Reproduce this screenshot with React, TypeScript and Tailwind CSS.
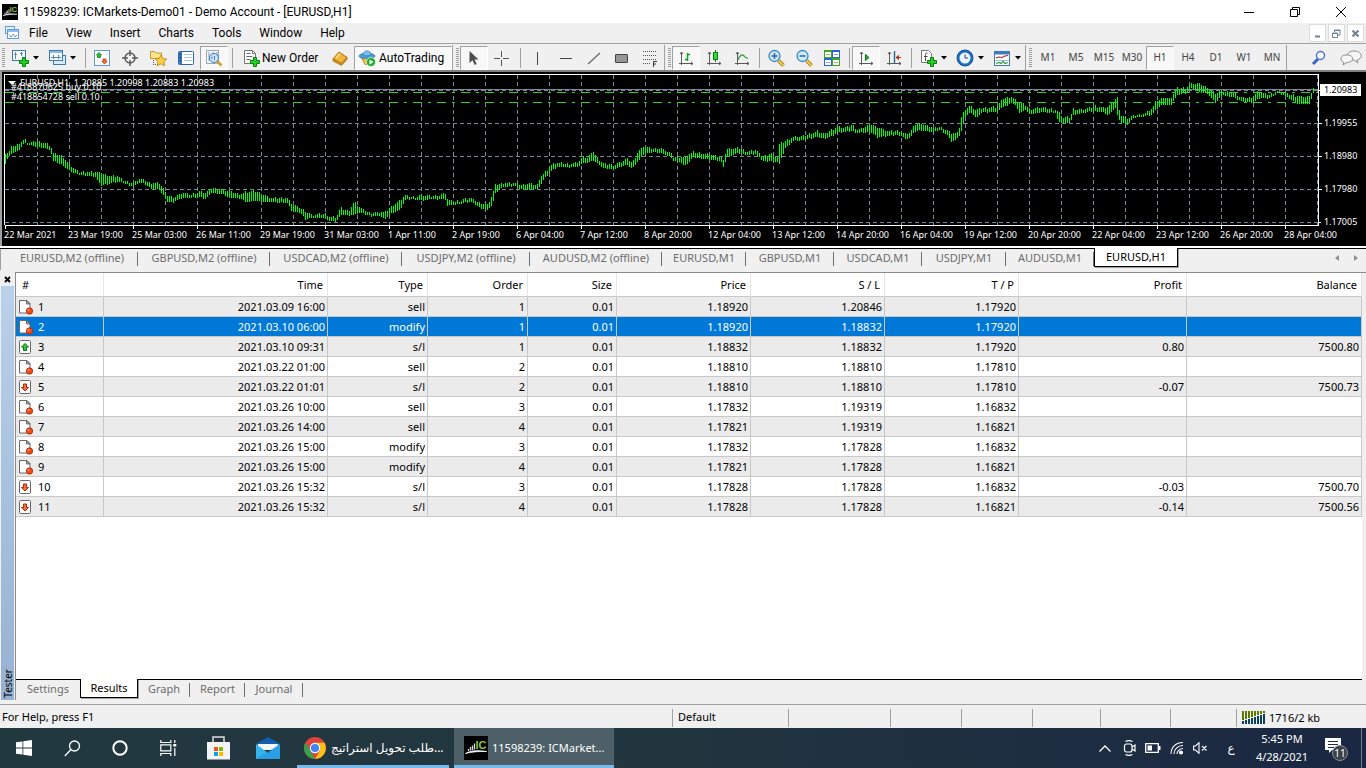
import clsx from 'clsx';
import type { ReactNode } from 'react';
import { useState } from 'react';

// [x, high, low] turning points of the H1 bars, in chart pixels
const ANCHORS: [number, number, number][] = [
  [5, 153, 164], [8, 153, 157], [12, 145, 153], [16, 146, 152], [20, 142, 148], [24, 139, 143],
  [28, 143, 145], [37, 141, 147], [43, 143, 148], [50, 145, 150], [53, 153, 161], [62, 156, 165],
  [68, 163, 170], [78, 172, 175], [95, 172, 177], [101, 173, 186], [110, 176, 183], [117, 176, 182],
  [123, 180, 183], [133, 183, 187], [138, 179, 183], [143, 180, 183], [150, 183, 188], [159, 183, 190],
  [163, 188, 195], [166, 195, 202], [173, 197, 202], [182, 193, 198], [190, 195, 198], [200, 191, 197],
  [205, 193, 199], [211, 188, 193], [222, 189, 194], [230, 192, 198], [240, 194, 198], [245, 192, 202],
  [255, 191, 201], [262, 194, 202], [270, 198, 202], [287, 198, 203], [292, 204, 212], [300, 208, 213],
  [305, 211, 219], [312, 215, 218], [325, 214, 218], [330, 217, 221], [336, 217, 222], [340, 208, 215],
  [348, 211, 215], [354, 202, 215], [360, 208, 213], [370, 213, 216], [380, 212, 216], [385, 212, 219],
  [390, 207, 214], [400, 200, 210], [405, 195, 200], [413, 197, 199], [422, 195, 201], [430, 196, 199],
  [440, 195, 199], [445, 193, 200], [447, 199, 206], [453, 202, 205], [470, 198, 202], [480, 203, 208],
  [487, 205, 210], [492, 195, 205], [495, 185, 193], [502, 183, 187], [515, 183, 186], [520, 185, 189],
  [528, 183, 190], [538, 185, 189], [540, 176, 185], [545, 172, 177], [552, 164, 170], [557, 163, 167],
  [567, 164, 167], [577, 162, 167], [583, 157, 163], [588, 158, 163], [592, 150, 160], [597, 158, 163],
  [602, 163, 168], [613, 165, 169], [622, 162, 166], [626, 158, 165], [632, 163, 169], [637, 153, 162],
  [643, 146, 155], [652, 149, 152], [660, 148, 153], [670, 153, 157], [673, 157, 161], [680, 157, 161],
  [684, 157, 167], [693, 152, 157], [707, 154, 159], [720, 157, 161], [723, 159, 166], [727, 149, 157],
  [740, 148, 153], [747, 152, 155], [755, 150, 154], [763, 157, 161], [770, 153, 161], [777, 157, 162],
  [779, 144, 164], [785, 141, 148], [793, 137, 141], [803, 136, 140], [817, 131, 137], [825, 134, 139],
  [837, 126, 133], [843, 128, 132], [852, 125, 131], [858, 130, 133], [870, 124, 132], [877, 127, 137],
  [887, 131, 136], [900, 131, 135], [905, 134, 139], [910, 132, 137], [914, 125, 132], [920, 123, 130],
  [933, 128, 132], [940, 127, 130], [947, 130, 135], [951, 133, 142], [958, 133, 138], [961, 117, 131],
  [965, 109, 117], [970, 106, 112], [976, 110, 118], [982, 108, 112], [997, 107, 112], [1002, 99, 107],
  [1007, 98, 106], [1010, 96, 102], [1015, 100, 105], [1019, 103, 113], [1025, 105, 110],
  [1030, 109, 114], [1043, 107, 112], [1055, 110, 113], [1058, 112, 122], [1063, 118, 123],
  [1070, 117, 123], [1073, 109, 115], [1082, 110, 113], [1095, 106, 111], [1103, 108, 112],
  [1108, 106, 115], [1115, 99, 108], [1117, 98, 115], [1120, 115, 122], [1127, 118, 125],
  [1133, 116, 118], [1145, 113, 116], [1152, 108, 115], [1155, 102, 110], [1163, 97, 104],
  [1170, 99, 106], [1177, 88, 95], [1185, 88, 93], [1192, 83, 88], [1199, 84, 92], [1207, 87, 93],
  [1215, 93, 103], [1222, 91, 95], [1233, 93, 97], [1242, 98, 102], [1253, 97, 103], [1258, 91, 98],
  [1268, 95, 99], [1277, 91, 93], [1285, 93, 96], [1297, 96, 104], [1309, 97, 104], [1313, 88, 93],
];

function buildBars() {
  let d = '';
  let i = 0;
  for (let x = 5; x <= 1313; x += 2) {
    while (i < ANCHORS.length - 2 && ANCHORS[i + 1][0] < x) i++;
    const [x0, h0, l0] = ANCHORS[i];
    const [x1, h1, l1] = ANCHORS[i + 1];
    const t = (x - x0) / (x1 - x0);
    const wobble = ((x * 37) % 11) / 5 - 1;
    const high = Math.round(h0 + (h1 - h0) * t + wobble);
    const low = Math.round(l0 + (l1 - l0) * t + wobble / 2);
    d += `M${x + 0.5} ${high}V${Math.max(low, high + 2)}`;
  }
  return d;
}

const BARS = buildBars();
const GRID_X = Array.from({ length: 41 }, (_, k) => 37 + k * 32);
const GRID_Y = [90, 123, 156, 189, 222];

const DATES = [
  '22 Mar 2021', '23 Mar 19:00', '25 Mar 03:00', '26 Mar 11:00', '29 Mar 19:00', '31 Mar 03:00', '1 Apr 11:00',
  '2 Apr 19:00', '6 Apr 04:00', '7 Apr 12:00', '8 Apr 20:00', '12 Apr 04:00', '13 Apr 12:00', '14 Apr 20:00',
  '16 Apr 04:00', '19 Apr 12:00', '20 Apr 20:00', '22 Apr 04:00', '23 Apr 12:00', '26 Apr 20:00', '28 Apr 04:00',
];

const CHART_TABS = [
  { name: 'EURUSD,M2 (offline)', width: 'w-[132px]' },
  { name: 'GBPUSD,M2 (offline)', width: 'w-[132px]' },
  { name: 'USDCAD,M2 (offline)', width: 'w-[132px]' },
  { name: 'USDJPY,M2 (offline)', width: 'w-[128px]' },
  { name: 'AUDUSD,M2 (offline)', width: 'w-[132px]' },
  { name: 'EURUSD,M1', width: 'w-[84px]' },
  { name: 'GBPUSD,M1', width: 'w-[88px]' },
  { name: 'USDCAD,M1', width: 'w-[88px]' },
  { name: 'USDJPY,M1', width: 'w-[84px]' },
  { name: 'AUDUSD,M1', width: 'w-[88px]' },
  { name: 'EURUSD,H1', width: 'w-[84px]' },
];

const TIMEFRAMES = ['M1', 'M5', 'M15', 'M30', 'H1', 'H4', 'D1', 'W1', 'MN'];

const TESTER_TABS = [
  { name: 'Settings', width: 'w-16' },
  { name: 'Results', width: 'w-[58px]' },
  { name: 'Graph', width: 'w-[52px]' },
  { name: 'Report', width: 'w-[55px]' },
  { name: 'Journal', width: 'w-[58px]' },
];

const COLUMNS = [
  { name: '#', width: 'w-[88px]' },
  { name: 'Time', width: 'w-[224px]' },
  { name: 'Type', width: 'w-[100px]' },
  { name: 'Order', width: 'w-[100px]' },
  { name: 'Size', width: 'w-[89px]' },
  { name: 'Price', width: 'w-[134px]' },
  { name: 'S / L', width: 'w-[134px]' },
  { name: 'T / P', width: 'w-[134px]' },
  { name: 'Profit', width: 'w-[168px]' },
  { name: 'Balance', width: '' },
];

type Kind = 'order' | 'up' | 'down';

const ROWS: { kind: Kind; cells: string[] }[] = [
  { kind: 'order', cells: ['2021.03.09 16:00', 'sell', '1', '0.01', '1.18920', '1.20846', '1.17920', '', ''] },
  { kind: 'order', cells: ['2021.03.10 06:00', 'modify', '1', '0.01', '1.18920', '1.18832', '1.17920', '', ''] },
  { kind: 'up', cells: ['2021.03.10 09:31', 's/l', '1', '0.01', '1.18832', '1.18832', '1.17920', '0.80', '7500.80'] },
  { kind: 'order', cells: ['2021.03.22 01:00', 'sell', '2', '0.01', '1.18810', '1.18810', '1.17810', '', ''] },
  { kind: 'down', cells: ['2021.03.22 01:01', 's/l', '2', '0.01', '1.18810', '1.18810', '1.17810', '-0.07', '7500.73'] },
  { kind: 'order', cells: ['2021.03.26 10:00', 'sell', '3', '0.01', '1.17832', '1.19319', '1.16832', '', ''] },
  { kind: 'order', cells: ['2021.03.26 14:00', 'sell', '4', '0.01', '1.17821', '1.19319', '1.16821', '', ''] },
  { kind: 'order', cells: ['2021.03.26 15:00', 'modify', '3', '0.01', '1.17832', '1.17828', '1.16832', '', ''] },
  { kind: 'order', cells: ['2021.03.26 15:00', 'modify', '4', '0.01', '1.17821', '1.17828', '1.16821', '', ''] },
  { kind: 'down', cells: ['2021.03.26 15:32', 's/l', '3', '0.01', '1.17828', '1.17828', '1.16832', '-0.03', '7500.70'] },
  { kind: 'down', cells: ['2021.03.26 15:32', 's/l', '4', '0.01', '1.17828', '1.17828', '1.16821', '-0.14', '7500.56'] },
];

/* ---------- icons ---------- */

function Icon({ size = 18, children }: { size?: number; children: ReactNode }) {
  return (
    <svg width={size} height={size} viewBox="0 0 18 18" fill="none" className="shrink-0" aria-hidden="true">
      {children}
    </svg>
  );
}

const plus = <path d="M11.500 8.500h3v3h3v3h-3v3h-3v-3h-3v-3h3z" fill="#1fd01f" stroke="#0a7d12" />;

const NewChartIcon = () => (
  <Icon>
    <rect x="1.5" y="1.5" width="13" height="10" fill="#f4faff" stroke="#3f78b4" />
    <path d="M4.5 3v7M3 5.500h3M10.500 3v4M9 4.500h3" stroke="#5d87ad" />
    {plus}
  </Icon>
);

const ProfilesIcon = () => (
  <Icon>
    <rect x="5.500" y="6.500" width="12" height="9" fill="#d9ebfb" stroke="#3f78b4" />
    <rect x="1.500" y="1.500" width="13" height="10" fill="#f4faff" stroke="#3f78b4" />
    <path d="M2 3h12" stroke="#8fb9e2" strokeWidth="2" />
    <path d="M3 8.500h10M5.500 6v4M10.500 6v4" stroke="#5d87ad" />
  </Icon>
);

const MarketWatchIcon = () => (
  <Icon>
    <rect x="1.500" y="1.500" width="15" height="15" fill="#fff" stroke="#5b9bdc" />
    <path d="M4 12h1M12 5h3" stroke="#c9d8e6" />
    <path d="M6 3.500l2.500 2.500H7.500v2.500h-3V6H3.500z" fill="#2fc12f" stroke="#0c7a17" strokeWidth=".8" />
    <path d="M11.500 15L9 12.500h1V10h3v2.500h1z" fill="#ff7038" stroke="#b83208" strokeWidth=".8" />
  </Icon>
);

const DataWindowIcon = () => (
  <Icon>
    <circle cx="9" cy="9" r="5" stroke="#5a5a5a" strokeWidth="1.500" />
    <path d="M9 1v6M9 11v6M1 9h6M11 9h6" stroke="#5a5a5a" strokeWidth="1.500" />
  </Icon>
);

const NavigatorIcon = () => (
  <Icon>
    <path d="M1.500 9.500v-7h4l1 1.500h6v5.500z" fill="#ffe48f" stroke="#c69a28" />
    <path d="M4.500 11v5M6 15.500h3" stroke="#555" strokeDasharray="1 1" />
    <path d="M12 6l1.800 3.600 4 .5-2.900 2.700.8 4-3.700-2-3.700 2 .8-4L6.200 10l4-.5z" fill="#ffcf3d" stroke="#b8860b" strokeWidth=".8" />
  </Icon>
);

const TerminalIcon = () => (
  <Icon>
    <rect x="1.500" y="2.500" width="15" height="13" rx="1" fill="#fff" stroke="#2a66b0" />
    <path d="M2 3h3v12H2z" fill="#3a76bd" />
    <path d="M3 5.500h1M3 8.500h1M3 11.500h1" stroke="#123" />
    <path d="M7 5.500h8M7 8.500h8M7 11.500h8" stroke="#a9c8e8" />
  </Icon>
);

const TesterIcon = () => (
  <Icon>
    <rect x="1.500" y="1.500" width="12" height="13" fill="#f5f7fa" stroke="#9aa7b5" />
    <path d="M4 3v9M8 3v4M12 3v4" stroke="#8797a8" />
    <path d="M12 12l4.500 4.500" stroke="#d6a31f" strokeWidth="2.500" />
    <circle cx="9" cy="9" r="4.500" fill="#c8e4fb" fillOpacity=".85" stroke="#3c7cc4" />
    <path d="M7 10V7.500M9.500 11V7" stroke="#4f81b4" />
  </Icon>
);

const NewOrderIcon = () => (
  <Icon>
    <path d="M2.500 1.500h8l3 3v10h-11z" fill="#fff" stroke="#777" />
    <path d="M10.500 1.500v3h3" stroke="#777" />
    <path d="M4.500 4.500h4M4.500 7.500h6M4.500 10.500h4" stroke="#666" />
    {plus}
  </Icon>
);

const MetaEditorIcon = () => (
  <Icon>
    <path d="M2 10l6-7 8 5.500-5.500 6z" fill="#f2b53a" stroke="#a86a0a" />
    <path d="M2 10l8.500 4.500 5.500-6v2l-5.500 6L2 12z" fill="#d9952a" stroke="#a86a0a" strokeWidth=".7" />
    <path d="M5 9l4-4.500" stroke="#ffe29a" strokeWidth="1.500" />
  </Icon>
);

const AutoTradingIcon = () => (
  <Icon>
    <path d="M3 8l4 7.500h4L15 8z" fill="#f3c445" stroke="#ad7f15" strokeWidth=".8" />
    <ellipse cx="9" cy="7" rx="8" ry="2.800" fill="#4b9fd6" stroke="#2873a8" strokeWidth=".7" />
    <path d="M5 6c0-5.500 8-5.500 8 0-2 1.200-6 1.200-8 0z" fill="#79c1ea" stroke="#2873a8" strokeWidth=".7" />
    <circle cx="13" cy="13" r="4.500" fill="#1fae2b" stroke="#fff" strokeWidth=".6" />
    <path d="M11.500 10.500l4 2.500-4 2.500z" fill="#fff" />
  </Icon>
);

const CursorIcon = () => (
  <Icon>
    <path d="M4.500 2v12l3-2.800 2.200 4.800 2-1-2.200-4.500h4z" fill="#4d4d4d" />
  </Icon>
);

const CrosshairIcon = () => (
  <Icon>
    <path d="M8.500 2v6M8.500 11v6M1 9.500h6M10 9.500h6" stroke="#555" />
  </Icon>
);

const VLineIcon = () => <Icon><path d="M8.500 3v13" stroke="#444" /></Icon>;
const HLineIcon = () => <Icon><path d="M3 9.500h12" stroke="#444" /></Icon>;
const TrendIcon = () => <Icon><path d="M3 15L15 4" stroke="#666" strokeWidth="1.200" /></Icon>;
const RectIcon = () => (
  <Icon><rect x="2.500" y="5.500" width="12" height="8" rx=".5" fill="#969696" stroke="#444" /></Icon>
);

const FiboIcon = () => (
  <Icon>
    <path d="M2 2.500h14M2 6.500h14M2 10.500h14M2 14.500h8" stroke="#555" strokeDasharray="1 1" />
    <path d="M12.500 18v-5.500H16M12.500 15H15" stroke="#333" />
  </Icon>
);

const axes = <path d="M4.500 3v13M2 14.500h14M3 5l1.500-2L6 5M14 13l2 1.500-2 1.500" stroke="#5a5a5a" />;

const BarIcon = () => (
  <Icon>{axes}<path d="M10.500 4v8M8 10.500h2.500M10.500 5.500H13" stroke="#16a01f" strokeWidth="1.500" /></Icon>
);

const CandleIcon = () => (
  <Icon>
    {axes}
    <path d="M10.500 1v12" stroke="#0b7d15" />
    <rect x="8.500" y="3.500" width="4" height="7" fill="#2bdc3a" stroke="#0b7d15" />
  </Icon>
);

const LineIcon = () => (
  <Icon>{axes}<path d="M5 11c2-6 5-6 7-3l3 1.500" stroke="#3aa043" strokeWidth="1.300" /></Icon>
);

function ZoomIcon({ plusSign }: { plusSign?: boolean }) {
  return (
    <Icon>
      <path d="M11.500 11.500l5 5" stroke="#8d6912" strokeWidth="3.500" />
      <path d="M11.500 11.500l5 5" stroke="#f5cf3c" strokeWidth="2" />
      <circle cx="7.500" cy="7" r="5.500" fill="#cfeafd" stroke="#3a86c8" strokeWidth="1.300" />
      <path d="M4.500 7h6" stroke="#2f6fa8" strokeWidth="1.600" />
      {plusSign && <path d="M7.500 4v6" stroke="#2f6fa8" strokeWidth="1.600" />}
    </Icon>
  );
}

const TileIcon = () => (
  <Icon>
    <path d="M1 1h8v8H1zM9 9h8v8H9z" fill="#43a51c" />
    <path d="M9 1h8v8H9zM1 9h8v8H1z" fill="#2a62d8" />
    <path d="M2 3h6v5H2zM10 3h6v5h-6zM2 11h6v5H2zM10 11h6v5h-6z" fill="#fff" />
    <path d="M3 5.500h4M11 5.500h4M3 13.500h4M11 13.500h4" stroke="#8ab0a0" />
  </Icon>
);

const ScrollIcon = () => (
  <Icon>{axes}<path d="M8.500 5.500v6L12 8.500z" fill="#1fb52a" stroke="#0b7d15" /></Icon>
);

const ShiftIcon = () => (
  <Icon>
    {axes}
    <path d="M9.500 2v12" stroke="#2b6f9e" strokeWidth="1.500" />
    <path d="M16 8.500h-3M13.500 6.500l-2.500 2 2.500 2z" stroke="#b33a12" fill="#b33a12" />
  </Icon>
);

const IndicatorIcon = () => (
  <Icon>
    <path d="M2.500 1.500h7l3 3v9h-10z" fill="#fff" stroke="#777" />
    <path d="M8.500 4C6 3.500 6.500 6 6.500 12M5 7.500h3.500" stroke="#444" />
    {plus}
  </Icon>
);

const ClockIcon = () => (
  <Icon>
    <circle cx="9" cy="9" r="8" fill="#1f6fc4" stroke="#164f8f" />
    <circle cx="9" cy="9" r="5.500" fill="#eaf5ff" />
    <path d="M9 5.500V9h3" stroke="#345" />
  </Icon>
);

const TemplateIcon = () => (
  <Icon>
    <rect x="1.500" y="2.500" width="15" height="14" fill="#fff" stroke="#3f78b4" />
    <path d="M2 4h14" stroke="#3b7cc6" strokeWidth="3" />
    <path d="M3 9l3-1 3 .5 3-1.500 3-.5" stroke="#9c2f22" strokeWidth="1.200" />
    <path d="M2 11.500h14" stroke="#9bbce0" />
    <path d="M3 14.500l3-1 2 1 2-2 2 2 3-1" stroke="#2d9c3a" strokeWidth="1.200" />
  </Icon>
);

const SearchIcon = () => (
  <Icon>
    <path d="M3 15l5-5" stroke="#3a62c4" strokeWidth="3" />
    <circle cx="10.500" cy="6.500" r="4" fill="#fff" stroke="#4b74d6" strokeWidth="1.500" />
  </Icon>
);

const ChatIcon = () => (
  <svg width="22" height="18" viewBox="0 0 22 18" fill="#f6f6f6" stroke="#8c8c8c" aria-hidden="true">
    <path d="M14 2c9 0 9 8 3 9l1 3-4-3C6 11 5 2 14 2z" />
    <path d="M7 6c-8 0-7 6.500-3 7.500L3 16l4-2.500c7 0 8-7.500 0-7.500z" />
  </svg>
);

function BrandIcon({ size }: { size: number }) {
  return (
    <svg width={size} height={size} viewBox="0 0 24 24" className="shrink-0" aria-hidden="true">
      <path d="M0 0h24v24H0z" fill="#000" />
      <path d="M4.500 15v-2M6.500 14.500V11M8.500 14V9.500M10.500 13.500V7.500" stroke="#d8d8d8" strokeWidth="1.300" />
      <path d="M1.500 17.500c5-3 11-3.500 21-2-8-.2-14 .2-21 2z" fill="#fff" stroke="#fff" strokeWidth=".8" />
      <text x="11.500" y="12.500" fontSize="11" fontWeight="700" fill="#8dc63f" fontFamily="Liberation Sans, sans-serif">IC</text>
    </svg>
  );
}

const RowIcon = ({ kind }: { kind: Kind }) => (
  <svg width="16" height="16" viewBox="0 0 16 16" fill="none" className="shrink-0" aria-hidden="true">
    {kind === 'order' ? (
      <>
        <path d="M1.500 1.500h7.500l3 3v9.500H1.500z" fill="#fff" stroke="#6a6a6a" />
        <path d="M8.500 1.500v3.500h3.500z" fill="#aaa" stroke="#555" strokeWidth=".8" />
        <circle cx="11.500" cy="12" r="3.200" fill="#f04a18" stroke="#a82a06" strokeWidth=".8" />
        <circle cx="10.500" cy="11" r="1" fill="#ff9a72" />
      </>
    ) : (
      <>
        <rect x="1.500" y="1.500" width="11" height="13" rx="1" fill="#fdfdfd" stroke="#6a6a6a" />
        {kind === 'up' ? (
          <path d="M7 4.500L10.500 8H8.500v3.500h-3V8h-2z" fill="#2fc93a" stroke="#0b7213" />
        ) : (
          <path d="M7 12L10.500 8.500H8.500V5h-3v3.500h-2z" fill="#ff6a3c" stroke="#a82a06" />
        )}
      </>
    )}
  </svg>
);

/* ---------- toolbar pieces ---------- */

const Caret = () => (
  <svg width="6" height="4" viewBox="0 0 6 4" className="shrink-0" aria-hidden="true">
    <path d="M0 0h6L3 3.500z" fill="#000" />
  </svg>
);

const Sep = ({ wide }: { wide?: boolean }) => (
  <span className={clsx('flex shrink-0 justify-center', wide ? 'w-2' : 'w-1.5')}>
    <span className="h-5 w-px bg-[#a0a0a0]" />
  </span>
);

// start of a docked bar: raised edge, then the dotted grip
const Grip = () => (
  <span className="flex h-full w-2 shrink-0 items-center gap-[3px]">
    <span className="h-full w-px bg-[#a0a0a0]" />
    <span className="h-5 w-[3px] bg-[repeating-linear-gradient(#a0a0a0_0_1px,#f0f0f0_1px_2px)]" />
  </span>
);

interface ToolProps {
  label: string;
  pressed?: boolean;
  menu?: boolean;
  children: ReactNode;
}

function Tool({ label, pressed, menu, children }: ToolProps) {
  return (
    <button
      aria-label={label}
      className={clsx(
        'flex h-6 shrink-0 items-center border',
        menu ? 'w-[37px] gap-1 pl-1' : 'w-7 justify-center',
        pressed ? 'border-r-white border-b-white border-t-[#a0a0a0] border-l-[#a0a0a0] bg-[#f8f8f8]' : 'border-transparent hover:bg-[#f8f8f8]',
      )}
    >
      {children}
      {menu && <Caret />}
    </button>
  );
}

function Toolbar() {
  const [frame, setFrame] = useState('H1');

  return (
    <div className="flex h-[27px] shrink-0 items-center border-t border-[#a0a0a0] bg-[#f0f0f0] pt-px">
      <span className="ml-0.5 mr-px h-5 w-[3px] bg-[repeating-linear-gradient(#a0a0a0_0_1px,#f0f0f0_1px_2px)]" />
      <span className="mr-0.5 flex">
        <Tool label="New Chart" menu><NewChartIcon /></Tool>
        <Tool label="Profiles" menu><ProfilesIcon /></Tool>
      </span>
      <Sep />
      <Tool label="Market Watch"><MarketWatchIcon /></Tool>
      <Tool label="Data Window"><DataWindowIcon /></Tool>
      <Tool label="Navigator"><NavigatorIcon /></Tool>
      <Tool label="Terminal"><TerminalIcon /></Tool>
      <Tool label="Strategy Tester" pressed><TesterIcon /></Tool>
      <Sep wide />
      <button className="flex h-6 w-[90px] shrink-0 items-center gap-0.5 pl-1.5 font-[Roboto] text-[12px] whitespace-nowrap">
        <NewOrderIcon />
        New Order
      </button>
      <Tool label="MetaEditor"><MetaEditorIcon /></Tool>
      <button className="flex h-6 w-[98px] shrink-0 items-center gap-[3px] border border-r-white border-b-white border-t-[#a0a0a0] border-l-[#a0a0a0] bg-[#f8f8f8] pl-[3px] font-[Roboto] text-[12px] whitespace-nowrap">
        <AutoTradingIcon />
        AutoTrading
      </button>
      <Grip />
      <Tool label="Cursor" pressed><CursorIcon /></Tool>
      <Tool label="Crosshair"><CrosshairIcon /></Tool>
      <Sep wide />
      <Tool label="Vertical Line"><VLineIcon /></Tool>
      <Tool label="Horizontal Line"><HLineIcon /></Tool>
      <Tool label="Trendline"><TrendIcon /></Tool>
      <Tool label="Rectangle"><RectIcon /></Tool>
      <Tool label="Fibonacci"><FiboIcon /></Tool>
      <Grip />
      <Tool label="Bar Chart" pressed><BarIcon /></Tool>
      <Tool label="Candlesticks"><CandleIcon /></Tool>
      <Tool label="Line Chart"><LineIcon /></Tool>
      <Sep />
      <Tool label="Zoom In"><ZoomIcon plusSign /></Tool>
      <Tool label="Zoom Out"><ZoomIcon /></Tool>
      <Tool label="Tile Windows"><TileIcon /></Tool>
      <Sep />
      <Tool label="Auto Scroll" pressed><ScrollIcon /></Tool>
      <Tool label="Chart Shift"><ShiftIcon /></Tool>
      <Sep />
      <Tool label="Indicators" menu><IndicatorIcon /></Tool>
      <Tool label="Periods" menu><ClockIcon /></Tool>
      <Tool label="Templates" menu><TemplateIcon /></Tool>
      <Grip />
      <span className="ml-px flex">
        {TIMEFRAMES.map((tf) => (
          <button
            key={tf}
            onClick={() => setFrame(tf)}
            className={clsx(
              'h-6 w-7 shrink-0 border text-center text-[10px] text-[#444]',
              tf === frame ? 'border-r-white border-b-white border-t-[#a0a0a0] border-l-[#a0a0a0] bg-[#f8f8f8]' : 'border-transparent',
            )}
          >
            {tf}
          </button>
        ))}
      </span>
      <span className="h-full w-px bg-[#a0a0a0]" />
      <span className="ml-auto flex items-center gap-3 pr-1">
        <button aria-label="Search"><SearchIcon /></button>
        <button aria-label="Chat"><ChatIcon /></button>
      </span>
    </div>
  );
}

/* ---------- chart ---------- */

function Chart() {
  return (
    <div className="relative h-[176px] shrink-0 overflow-hidden border-t-2 border-l-2 border-t-[#808080] border-l-[#a0a0a0] bg-black text-[9px] text-white">
      <svg width="1320" height="160" viewBox="2 72 1320 160" fill="none" shapeRendering="crispEdges" aria-hidden="true">
        <g stroke="#778899" strokeDasharray="4 3">
          {GRID_X.map((x) => <path key={x} d={`M${x + 0.5} 75V225`} />)}
          {GRID_Y.map((y) => <path key={y} d={`M5 ${y + 0.5}H1318`} />)}
        </g>
        <path d="M5 89.500H1318" stroke="#778899" />
        <path d="M5 92.500H1318M5 102.500H1318" stroke="#32cd32" strokeDasharray="9 6 3 6" />
        <path d={BARS} stroke="#00ff00" />
        <path d="M4.500 225V74.500H1318.500V225.500H4.500" stroke="#fff" />
        <path d={DATES.map((_, k) => `M${5.500 + k * 64} 226v3`).join('')} stroke="#fff" />
        <path d="M1319 90.500h3M1319 123.500h3M1319 156.500h3M1319 189.500h3M1319 222.500h2" stroke="#fff" />
      </svg>
      <div className="absolute top-[157px] left-0.5 flex leading-3 whitespace-nowrap">
        {DATES.map((d) => <span key={d} className="w-16 shrink-0">{d}</span>)}
      </div>
      <p className="absolute top-[5px] left-1.5 flex items-center gap-1 leading-3 whitespace-pre">
        <svg width="8" height="4" aria-hidden="true"><path d="M0 0h8L4 4z" fill="#fff" /></svg>
        EURUSD,H1  1.20885 1.20998 1.20883 1.20983
      </p>
      <p className="absolute top-[9px] left-[9px] leading-3">#418870625 buy 0.10</p>
      <p className="absolute top-[19px] left-[9px] leading-3">#418854728 sell 0.10</p>
      <div className="absolute top-3 left-[1318px] flex flex-col gap-[21px] leading-3">
        <span className="w-[41px] bg-white pl-1 text-black">1.20983</span>
        <span className="pl-1">1.19955</span>
        <span className="pl-1">1.18980</span>
        <span className="pl-1">1.17980</span>
        <span className="pl-1">1.17005</span>
      </div>
    </div>
  );
}

function ChartTabs() {
  const [active, setActive] = useState('EURUSD,H1');

  return (
    <div className="flex h-[22px] shrink-0 border-t border-black bg-[#f0f0f0] pl-1.5 shadow-[inset_1px_0_#a0a0a0]">
      {CHART_TABS.map((tab) => {
        const on = tab.name === active;
        return (
          <button
            key={tab.name}
            onClick={() => setActive(tab.name)}
            className={clsx(
              'relative h-[19px] shrink-0 text-[11px] whitespace-nowrap',
              tab.width,
              on
                ? '-mt-px h-5 border border-t-0 border-black bg-white text-black shadow-[1px_1px_#a0a0a0]'
                : 'text-[#6d6d6d] after:absolute after:top-[3px] after:right-0 after:h-3.5 after:w-px after:bg-[#6d6d6d]',
            )}
          >
            {tab.name}
          </button>
        );
      })}
      <span className="ml-auto flex items-center gap-[15px] pr-2 pb-1">
        <button aria-label="Scroll left">
          <svg width="4" height="6" aria-hidden="true"><path d="M4 0v6L0 3z" fill="#8c8c8c" /></svg>
        </button>
        <button aria-label="Scroll right">
          <svg width="4" height="6" aria-hidden="true"><path d="M0 0v6l4-3z" fill="#8c8c8c" /></svg>
        </button>
      </span>
    </div>
  );
}

/* ---------- tester ---------- */

function ResultsTable() {
  const [selected, setSelected] = useState(1);

  return (
    <table className="w-full table-fixed border-separate border-spacing-0 text-[11px] leading-4">
      <thead>
        <tr>
          {COLUMNS.map((col, i) => (
            <th
              key={col.name}
              className={clsx(
                'h-6 border-r border-b border-r-[#e5e5e5] border-b-[#c8c8c8] p-0 font-normal',
                col.width,
                i === 0 ? 'pl-1.5 text-left' : 'pr-1 text-right',
              )}
            >
              {col.name}
            </th>
          ))}
        </tr>
      </thead>
      <tbody>
        {ROWS.map((row, i) => (
          <tr
            key={i}
            onClick={() => setSelected(i)}
            className={clsx(i === selected ? 'bg-[#0078d7] text-white' : i % 2 === 0 ? 'bg-[#ebebeb]' : 'bg-white')}
          >
            <td className="h-5 border-r border-b border-[#c8c8c8] p-0">
              <span className="flex items-center gap-1 pl-0.5">
                <RowIcon kind={row.kind} />
                {i + 1}
              </span>
            </td>
            {row.cells.map((cell, c) => (
              <td key={c} className="h-5 border-r border-b border-[#c8c8c8] p-0 pr-0.5 text-right">{cell}</td>
            ))}
          </tr>
        ))}
      </tbody>
    </table>
  );
}

function Tester() {
  const [tab, setTab] = useState('Results');

  return (
    <section className="flex min-h-0 flex-1 bg-[#f0f0f0] pt-0.5">
      <div className="flex w-[15px] shrink-0 flex-col px-px">
        <button aria-label="Close" className="flex h-3.5 items-center justify-center">
          <svg width="7" height="7" aria-hidden="true"><path d="M1 1l5 5M6 1L1 6" stroke="#000" strokeWidth="1.800" /></svg>
        </button>
        <div className="flex flex-1 items-end justify-center bg-linear-to-b from-[#b9d1ea] to-[#97b1d2] pb-0.5">
          <span className="rotate-180 text-[10px] leading-3 [writing-mode:vertical-rl]">Tester</span>
        </div>
      </div>
      <div className="flex min-w-0 flex-1 flex-col border-t border-l border-[#8c8c8c] pr-1">
        <div className="min-h-0 flex-1 bg-white">
          <ResultsTable />
        </div>
        <div className="flex h-[21px] shrink-0 border-t border-black">
          {TESTER_TABS.map((t) => (
            <button
              key={t.name}
              onClick={() => setTab(t.name)}
              className={clsx(
                'relative h-[19px] text-[11px]',
                t.width,
                t.name === tab
                  ? '-mt-px h-5 border border-t-0 border-black bg-white shadow-[1px_1px_#a0a0a0]'
                  : 'text-[#6d6d6d]',
                t.name !== tab && t.name !== 'Settings' && 'after:absolute after:top-[3px] after:right-0 after:h-3.5 after:w-px after:bg-[#6d6d6d]',
              )}
            >
              {t.name}
            </button>
          ))}
        </div>
      </div>
    </section>
  );
}

function StatusBar() {
  return (
    <footer className="mt-1 flex h-6 shrink-0 items-center border-t border-[#a0a0a0] bg-[#f0f0f0] pt-0.5 text-[11px] leading-4">
      <span className="h-[18px] flex-1 pl-0.5">For Help, press F1</span>
      <span className="h-[18px] w-[116px] border-l border-[#a0a0a0] pl-[5px]">Default</span>
      <span className="h-[18px] w-[102px] border-l border-[#a0a0a0]" />
      <span className="h-[18px] w-[71px] border-l border-[#a0a0a0]" />
      <span className="h-[18px] w-[71px] border-l border-[#a0a0a0]" />
      <span className="h-[18px] w-[68px] border-l border-[#a0a0a0]" />
      <span className="h-[18px] w-[70px] border-l border-[#a0a0a0]" />
      <span className="h-[18px] w-[66px] border-l border-[#a0a0a0]" />
      <span className="flex h-[18px] w-[130px] items-center gap-[3px] border-l border-[#a0a0a0] pl-[5px]">
        <svg width="24" height="13" shapeRendering="crispEdges" aria-hidden="true">
          {[0, 1, 2, 3, 4, 5, 6, 7].map((k) => (
            <g key={k}>
              <path d={`M${k * 3 + 1} 0v${9 - k}`} stroke="#5c7a00" strokeWidth="2" />
              <path d={`M${k * 3 + 1} ${10 - k}V13`} stroke="#0b3f5c" strokeWidth="2" />
            </g>
          ))}
        </svg>
        1716/2 kb
      </span>
    </footer>
  );
}

/* ---------- windows taskbar ---------- */

function Taskbar() {
  return (
    <nav className="flex h-10 shrink-0 items-stretch bg-linear-to-r from-[#22383f] via-[#21353f] to-[#1a2742] text-[11px] text-white">
      <button aria-label="Start" className="flex w-12 items-center justify-center">
        <svg width="16" height="16" viewBox="0 0 16 16" fill="#fff" aria-hidden="true">
          <path d="M0 2.300L6.500 1.400v6.200H0zM7.300 1.300L16 0v7.600H7.300zM0 8.400h6.500v6.200L0 13.700zM7.300 8.400H16V16l-8.700-1.300z" />
        </svg>
      </button>
      <button aria-label="Search" className="flex w-12 items-center justify-center">
        <svg width="17" height="17" viewBox="0 0 17 17" fill="none" stroke="#fff" strokeWidth="1.300" aria-hidden="true">
          <circle cx="10.500" cy="6" r="5" />
          <path d="M7 9.500L.8 16" />
        </svg>
      </button>
      <button aria-label="Cortana" className="flex w-12 items-center justify-center">
        <svg width="16" height="16" aria-hidden="true"><circle cx="8" cy="8" r="6.700" fill="none" stroke="#fff" strokeWidth="2" /></svg>
      </button>
      <button aria-label="Task View" className="flex w-12 items-center justify-center">
        <svg width="17" height="16" viewBox="0 0 17 16" fill="none" stroke="#fff" strokeWidth="1.200" aria-hidden="true">
          <path d="M.8 0v2.500h10V0M.8 16v-2.500h10V16M.8 4.800h10v6H.8zM14.800 0v3M14.800 8v8" />
          <path d="M13.300 4h3v2.500h-3z" fill="#fff" stroke="none" />
        </svg>
      </button>
      <button aria-label="Store" className="flex w-[52px] items-center justify-center">
        <svg width="23" height="24" viewBox="0 0 23 24" aria-hidden="true">
          <path d="M6 6V1h11v5" fill="none" stroke="#ddd" strokeWidth="1.500" />
          <path d="M0 6h23v17.500H0z" fill="#f3f3f3" />
          <path d="M7 11h4v4H7z" fill="#f25022" />
          <path d="M12 11h4v4h-4z" fill="#7fba00" />
          <path d="M7 16h4v4H7z" fill="#00a4ef" />
          <path d="M12 16h4v4h-4z" fill="#ffb900" />
        </svg>
      </button>
      <button aria-label="Mail" className="mr-[5px] flex w-12 items-center justify-center">
        <svg width="24" height="22" viewBox="0 0 24 22" aria-hidden="true">
          <path d="M0 7l12-7 12 7v3H0z" fill="#0f5fae" />
          <path d="M2 7h20v6H2z" fill="#f5f5f5" />
          <path d="M0 7l12 9 12-9v15H0z" fill="#35b4ee" />
          <path d="M0 22L24 7v15z" fill="#1f8fe0" opacity=".55" />
        </svg>
      </button>
      <button className="flex w-[152px] items-center gap-[5px] border-b-3 border-[#76b9ed] pt-[3px] pl-[7px] text-[12px] whitespace-nowrap">
        <svg width="22" height="22" viewBox="0 0 22 22" className="shrink-0" aria-hidden="true">
          <circle cx="11" cy="11" r="11" fill="#e1433a" />
          <path d="M1.500 5.500L6.400 13.800 11 22A11 11 0 0 1 1.500 5.500z" fill="#34a350" />
          <path d="M20.500 5.700H11l4.800 8L11 22a11 11 0 0 0 9.500-16.300z" fill="#fbc116" />
          <circle cx="11" cy="11" r="5.200" fill="#fff" />
          <circle cx="11" cy="11" r="4.100" fill="#4285f4" />
        </svg>
        <span>طلب تحويل استراتيج...</span>
      </button>
      <button className="ml-[5px] flex w-40 items-center gap-1 border-b-3 border-[#76b9ed] bg-[#4d6067] pt-[3px] pl-2.5 whitespace-nowrap">
        <BrandIcon size={24} />
        11598239: ICMarket...
      </button>
      <div className="ml-auto flex items-center">
        <button aria-label="Hidden icons" className="flex w-6 justify-center">
          <svg width="12" height="7" fill="none" stroke="#fff" strokeWidth="1.300" aria-hidden="true"><path d="M.5 6.500L6 1l5.500 5.500" /></svg>
        </button>
        <button aria-label="Meet Now" className="flex w-6 justify-center">
          <svg width="13" height="16" fill="none" stroke="#fff" strokeWidth="1.200" aria-hidden="true">
            <rect x="1.500" y="4" width="7.500" height="8" rx="2" />
            <path d="M9 7l3-2v6L9 9M2.500 1.500c2-1 5-1 7 0M2.500 14.500c2 1 5 1 7 0" />
          </svg>
        </button>
        <button aria-label="Battery" className="flex w-6 justify-center">
          <svg width="16" height="10" aria-hidden="true">
            <path d="M.7.700h12.600v8.600H.7z" fill="none" stroke="#fff" strokeWidth="1.300" />
            <path d="M2.500 2.500H7v5H2.500zM14 3h1.500v4H14z" fill="#fff" />
          </svg>
        </button>
        <button aria-label="Network" className="flex w-6 justify-center">
          <svg width="14" height="14" fill="none" stroke="#fff" strokeWidth="1.100" aria-hidden="true">
            <path d="M1 13C1 6 6 1.500 13 1.500M4 13c0-5 4-8.500 9-8.500M7 13c0-3 3-5.500 6-5.500" />
            <circle cx="11" cy="11.500" r="1.500" fill="#fff" />
          </svg>
        </button>
        <button aria-label="Volume" className="flex w-[22px] justify-center">
          <svg width="15" height="12" fill="none" stroke="#fff" strokeWidth="1.100" aria-hidden="true">
            <path d="M.6 4v4h2L6 11.300V.700L2.600 4zM9 4l4.500 4.500M13.500 4L9 8.500" />
          </svg>
        </button>
        <span className="w-10 text-center text-[12px]">ع</span>
        <time className="w-[62px] text-center leading-[18px]">
          5:45 PM
          <br />
          4/28/2021
        </time>
        <button aria-label="Notifications" className="relative mx-3 h-6 w-6">
          <svg width="16" height="15" className="absolute top-0.5 left-0" aria-hidden="true">
            <path d="M0 0h16v12H7l-3 3v-3H0z" fill="#fff" />
            <path d="M3 3.500h10M3 6.500h10M3 9.500h6" stroke="#1d2c40" />
          </svg>
          <span className="absolute top-[9px] left-[7px] flex h-4 w-4 items-center justify-center rounded-full border border-[#8a8f99] bg-[#3a4048] text-[10px] leading-none">
            11
          </span>
        </button>
        <span className="mr-1 h-10 w-px bg-[#76808c]" />
      </div>
    </nav>
  );
}

export default function App() {
  return (
    <div className="flex h-screen min-w-[1366px] flex-col overflow-hidden bg-[#f0f0f0] font-['Noto_Sans','DejaVu_Sans',sans-serif] text-black">
      <header className="flex h-[23px] shrink-0 items-center bg-white pl-0.5 font-[Roboto] text-[12px]">
        <BrandIcon size={16} />
        <h1 className="pl-[5px]">11598239: ICMarkets-Demo01 - Demo Account - [EURUSD,H1]</h1>
        <span className="ml-auto flex items-center gap-9 pr-5">
          <button aria-label="Minimize"><svg width="10" height="10" aria-hidden="true"><path d="M0 5.500h10" stroke="#000" /></svg></button>
          <button aria-label="Restore">
            <svg width="10" height="10" fill="none" stroke="#000" aria-hidden="true"><path d="M.5 2.500h7v7h-7zM2.500 2.500v-2h7v7h-2" /></svg>
          </button>
          <button aria-label="Close"><svg width="10" height="10" aria-hidden="true"><path d="M0 0l10 10M10 0L0 10" stroke="#000" /></svg></button>
        </span>
      </header>
      <div className="flex h-5 shrink-0 items-center pl-1 font-[Roboto] text-[12px]">
        <svg width="16" height="16" viewBox="0 0 16 16" fill="none" aria-hidden="true">
          <rect x="1.500" y="1.500" width="9" height="7" fill="#eaf4ff" stroke="#5e9be0" />
          <rect x="3.500" y="4.500" width="11" height="9" fill="#fff" stroke="#5e9be0" />
          <path d="M4 6h10" stroke="#8fbcf0" strokeWidth="2" />
          <path d="M5 9.500l2 2.500 2-3 2 3 2-2" stroke="#5e9be0" />
        </svg>
        <nav className="flex">
          {['File', 'View', 'Insert', 'Charts', 'Tools', 'Window', 'Help'].map((m) => (
            <button key={m} className="px-[9px]">{m}</button>
          ))}
        </nav>
        <span className="ml-auto flex gap-0.5 pr-0.5 text-[#6f8096]">
          <button aria-label="Minimize chart" className="flex h-[18px] w-[17px] items-center justify-center border border-[#dcdcdc] bg-white">
            <svg width="9" height="9" aria-hidden="true"><path d="M2 7.500h5" stroke="currentColor" strokeWidth="2" /></svg>
          </button>
          <button aria-label="Restore chart" className="flex h-[18px] w-[17px] items-center justify-center border border-[#dcdcdc] bg-white">
            <svg width="9" height="9" fill="none" stroke="currentColor" aria-hidden="true"><path d="M.5 4h5v4.500h-5zM.5 4.500h5M2.500 3V1h5.500v5h-2M2.500 1.500H8" /></svg>
          </button>
          <button aria-label="Close chart" className="flex h-[18px] w-[17px] items-center justify-center border border-[#dcdcdc] bg-white">
            <svg width="9" height="9" aria-hidden="true"><path d="M1.500 1.500l6 6M7.500 1.500l-6 6" stroke="currentColor" strokeWidth="2" /></svg>
          </button>
        </span>
      </div>
      <Toolbar />
      <Chart />
      <div className="h-0.5 shrink-0 bg-white" />
      <ChartTabs />
      <Tester />
      <StatusBar />
      <Taskbar />
    </div>
  );
}
